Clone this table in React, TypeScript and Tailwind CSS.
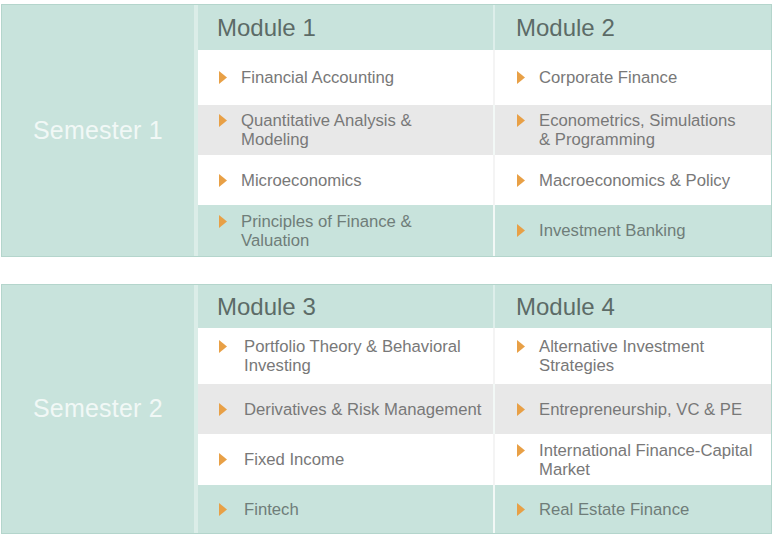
import React from 'react';

interface Section {
    semester: string;
    modules: [string, string];
    headerH: string;
    rows: { h: string; bg: 'white' | 'gray' | 'teal'; left: string[]; right: string[] }[];
    leftGap: string;
}

const sections: Section[] = [
    {
        semester: 'Semester 1',
        modules: ['Module 1', 'Module 2'],
        headerH: 'h-[45px]',
        leftGap: 'gap-[14px]',
        rows: [
            { h: 'h-[55px]', bg: 'white', left: ['Financial Accounting'], right: ['Corporate Finance'] },
            { h: 'h-[50px]', bg: 'gray', left: ['Quantitative Analysis &', 'Modeling'], right: ['Econometrics, Simulations', '& Programming'] },
            { h: 'h-[50px]', bg: 'white', left: ['Microeconomics'], right: ['Macroeconomics & Policy'] },
            { h: 'h-[51px]', bg: 'teal', left: ['Principles of Finance &', 'Valuation'], right: ['Investment Banking'] },
        ],
    },
    {
        semester: 'Semester 2',
        modules: ['Module 3', 'Module 4'],
        headerH: 'h-[43px]',
        leftGap: 'gap-[17px]',
        rows: [
            { h: 'h-[56px]', bg: 'white', left: ['Portfolio Theory & Behavioral', 'Investing'], right: ['Alternative Investment', 'Strategies'] },
            { h: 'h-[50px]', bg: 'gray', left: ['Derivatives & Risk Management'], right: ['Entrepreneurship, VC & PE'] },
            { h: 'h-[51px]', bg: 'white', left: ['Fixed Income'], right: ['International Finance-Capital', 'Market'] },
            { h: 'h-[48px]', bg: 'teal', left: ['Fintech'], right: ['Real Estate Finance'] },
        ],
    },
];

const rowBg = {
    white: 'bg-white',
    gray: 'bg-[#e8e8e8]',
    teal: 'bg-[#c8e3dc]',
};

function Arrow() {
    return (
        <svg width="8" height="13" viewBox="0 0 8 13" className="mt-[3px] shrink-0">
            <polygon points="0,0 8,6.5 0,13" fill="#e8a046" />
        </svg>
    );
}

function Entry({ lines, gap, teal }: { lines: string[]; gap: string; teal: boolean }) {
    return (
        <div className={`flex items-start ${gap}`}>
            <Arrow />
            <div className={`text-[16.7px] leading-[19px] ${teal ? 'text-[#6f7d79]' : 'text-[#787878]'}`}>
                {lines.map((l, i) => (
                    <div key={i} className="whitespace-nowrap">{l}</div>
                ))}
            </div>
        </div>
    );
}

function Block({ s, className }: { s: Section; className: string }) {
    return (
        <div className={`flex border border-[#b4d5cc] ${className}`}>
            <div className="w-[196px] bg-[#c8e3dc] flex items-center pl-[31px] border-r-[4px] border-[#dbede8]">
                <span className="text-[25px] text-[#f1f8f6] tracking-[0.2px]">{s.semester}</span>
            </div>
            <div className="flex-1 flex flex-col">
                <div className={`flex ${s.headerH} bg-[#c8e3dc]`}>
                    <div className="w-[297px] border-r-2 border-[#ddeeea] flex items-center pl-[19px] text-[24px] text-[#5c6b67]">
                        {s.modules[0]}
                    </div>
                    <div className="flex-1 flex items-center pl-[21px] text-[24px] text-[#5c6b67]">
                        {s.modules[1]}
                    </div>
                </div>
                {s.rows.map((r, i) => (
                    <div key={i} className={`flex ${r.h} ${rowBg[r.bg]}`}>
                        <div className={`w-[297px] border-r-2 ${r.bg === 'white' ? 'border-[#f4f4f4]' : 'border-[#f2f8f6]'} flex items-center pl-[21px]`}>
                            <Entry lines={r.left} gap={s.leftGap} teal={r.bg === 'teal'} />
                        </div>
                        <div className="flex-1 flex items-center pl-[22px]">
                            <Entry lines={r.right} gap="gap-[14px]" teal={r.bg === 'teal'} />
                        </div>
                    </div>
                ))}
            </div>
        </div>
    );
}

export default function App() {
    return (
        <div className="w-[772px] h-[536px] bg-white overflow-hidden font-['Liberation_Sans',Arial,sans-serif]">
            <div className="pt-[4px] pl-[1px] flex flex-col gap-[27px]">
                <Block s={sections[0]} className="h-[253px]" />
                <Block s={sections[1]} className="h-[250px]" />
            </div>
        </div>
    );
}
